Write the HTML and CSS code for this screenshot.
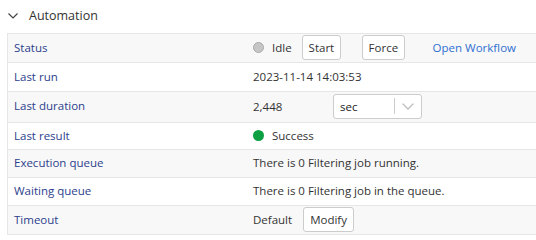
FILE: index.html
```html
<!DOCTYPE html>
<html lang="en">
<head>
    <meta charset="UTF-8">
    <meta name="viewport" content="width=device-width, initial-scale=1.0">
    <title>Automation</title>
    <link rel="stylesheet" href="styles.css">
</head>
<body>
    <div class="panel">
        <div class="panel-title">
            <svg class="chevron" width="10" height="6" viewBox="0 0 10 6">
                <path d="M0.5 0.5 L5 5 L9.5 0.5" fill="none" stroke="#444" stroke-width="1.2"/>
            </svg>
            <span>Automation</span>
        </div>

        <table class="props">
            <tr class="row-tall">
                <td class="label">Status</td>
                <td class="value">
                    <div class="line">
                        <span class="dot dot-idle"></span>
                        <span class="state">Idle</span>
                        <button class="btn btn-start">Start</button>
                        <button class="btn btn-force">Force</button>
                        <a href="#" class="link">Open Workflow</a>
                    </div>
                </td>
            </tr>
            <tr class="row-tall">
                <td class="label">Last run</td>
                <td class="value">2023-11-14 14:03:53</td>
            </tr>
            <tr class="row-duration">
                <td class="label">Last duration</td>
                <td class="value">
                    <div class="line">
                        <span class="duration">2,448</span>
                        <span class="select">
                            <span class="select-text">sec</span>
                            <span class="select-sep"></span>
                            <svg class="select-arrow" width="12" height="7" viewBox="0 0 12 7">
                                <path d="M0.6 0.6 L6 6 L11.4 0.6" fill="none" stroke="#bbb" stroke-width="1.3"/>
                            </svg>
                        </span>
                    </div>
                </td>
            </tr>
            <tr class="row-short">
                <td class="label">Last result</td>
                <td class="value">
                    <div class="line">
                        <span class="dot dot-ok"></span>
                        <span class="state">Success</span>
                    </div>
                </td>
            </tr>
            <tr>
                <td class="label">Execution queue</td>
                <td class="value">There is 0 Filtering job running.</td>
            </tr>
            <tr>
                <td class="label">Waiting queue</td>
                <td class="value">There is 0 Filtering job in the queue.</td>
            </tr>
            <tr class="row-tall">
                <td class="label">Timeout</td>
                <td class="value">
                    <div class="line">
                        <span class="state state-default">Default</span>
                        <button class="btn">Modify</button>
                    </div>
                </td>
            </tr>
        </table>
    </div>
</body>
</html>
```

FILE: styles.css
```css
body {
    margin: 0;
    font-family: "Open Sans", Arial, sans-serif;
    font-size: 11.5px;
    color: #333;
    background: #fff;
}

.panel {
    padding: 0 0 0 7px;
}

.panel-title {
    display: flex;
    align-items: center;
    height: 31px;
    padding-bottom: 2px;
    font-size: 12.5px;
    color: #333;
}

.chevron {
    margin: 0 11px 0 1px;
}

.props {
    width: 540px;
    border-collapse: collapse;
    border-top: 1px solid #e6e6e6;
    border-left: 1px solid #e6e6e6;
}

.props tr {
    height: 28px;
    border-bottom: 1px solid #e6e6e6;
}

.props tr:nth-child(odd) {
    background: #f8f8f8;
}

.props .row-tall {
    height: 29px;
}

.props .row-duration {
    height: 31px;
}

.props .row-short {
    height: 27px;
}

.label {
    width: 227px;
    padding: 0 6px 2px;
    color: #2b3e8c;
}

.row-duration .label {
    padding-bottom: 4px;
}

.value {
    padding: 0 6px 2px;
    color: #333;
}

.line {
    display: flex;
    align-items: center;
}

.dot {
    display: inline-block;
    box-sizing: border-box;
    width: 11px;
    height: 11px;
    border-radius: 50%;
    margin-right: 8px;
}

.dot-idle {
    background: #c6c6c6;
    border: 1px solid #aaa;
}

.dot-ok {
    background: #0ca043;
}

.state {
    margin-right: 10px;
}

.state-default {
    margin-right: 11px;
}

.btn {
    font-family: inherit;
    font-size: 11.5px;
    color: #333;
    background: #fff;
    border: 1px solid #ccc;
    border-radius: 3px;
    height: 25px;
    padding: 0 6px;
}

.btn-start {
    width: 39px;
}

.btn-force {
    width: 43px;
    margin-left: 21px;
}

.link {
    color: #2e6fd1;
    text-decoration: none;
    margin-left: 28px;
}

.duration {
    width: 80px;
}

.select {
    display: flex;
    align-items: center;
    width: 89px;
    height: 25px;
    border: 1px solid #ccc;
    border-radius: 3px;
    background: #fff;
    box-sizing: border-box;
}

.select-text {
    flex: 1;
    padding-left: 6px;
    color: #222;
}

.select-sep {
    width: 1px;
    height: 16px;
    background: #ccc;
}

.select-arrow {
    margin: 0 7px 0 7px;
}
```
